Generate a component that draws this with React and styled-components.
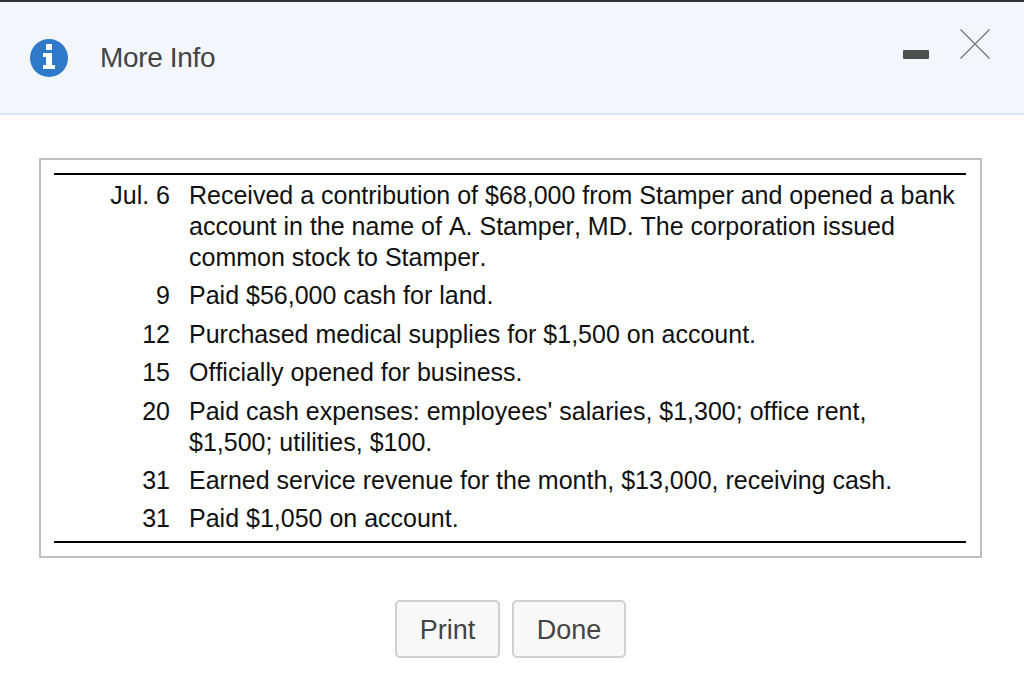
import React from "react"
import styled, { createGlobalStyle } from "styled-components"

const rows = [
  { day: "Jul. 6", lines: ["Received a contribution of $68,000 from Stamper and opened a bank", "account in the name of A. Stamper, MD. The corporation issued", "common stock to Stamper."] },
  { day: "9", lines: ["Paid $56,000 cash for land."] },
  { day: "12", lines: ["Purchased medical supplies for $1,500 on account."] },
  { day: "15", lines: ["Officially opened for business."] },
  { day: "20", lines: ["Paid cash expenses: employees' salaries, $1,300; office rent,", "$1,500; utilities, $100."] },
  { day: "31", lines: ["Earned service revenue for the month, $13,000, receiving cash."] },
  { day: "31", lines: ["Paid $1,050 on account."] },
]

const App = () => (
  <>
    <Global />
    <Page>
      <Header>
        <Title>
          <svg width="38" height="38" viewBox="0 0 38 38">
            <circle cx="19" cy="19" r="19" fill="#2f79c9" />
            <rect x="16" y="5" width="6" height="6" fill="#fff" />
            <path d="M13 14h9v12h3v4H13v-4h3v-8h-3z" fill="#fff" />
          </svg>
          <TitleText>More Info</TitleText>
        </Title>
        <Controls>
          <MinimizeBar />
          <CloseIcon width="30" height="30" viewBox="0 0 30 30">
            <path d="M0.5 0.5l29 29M29.5 0.5l-29 29" stroke="#777" strokeWidth="1.3" fill="none" />
          </CloseIcon>
        </Controls>
      </Header>
      <Panel>
        <Table>
          {rows.map((row, i) => (
            <Row key={i}>
              <Day>{row.day}</Day>
              <div>
                {row.lines.map((line) => (
                  <Line key={line}>{line}</Line>
                ))}
              </div>
            </Row>
          ))}
        </Table>
      </Panel>
      <Buttons>
        <Button $w={105}>Print</Button>
        <Button $w={114}>Done</Button>
      </Buttons>
    </Page>
  </>
)

export default App

const Global = createGlobalStyle`
  html, body {
    margin: 0;
    padding: 0;
    background: #fff;
    overflow: hidden;
  }
`

const Page = styled.div`
  width: 1024px;
  height: 685px;
  font-family: "Liberation Sans", Arial, sans-serif;
  border-top: 2px solid #333;
  box-sizing: border-box;
`

const Header = styled.div`
  height: 113px;
  box-sizing: border-box;
  background: #f3f6fb;
  border-bottom: 2px solid #d3e5f6;
  display: flex;
  justify-content: space-between;
  align-items: flex-start;
  padding: 27px 34px 0 30px;
`

const Title = styled.div`
  display: flex;
  align-items: center;
  gap: 32px;
  margin-top: 10px;
`

const TitleText = styled.span`
  font-size: 28px;
  color: #444;
  letter-spacing: -0.35px;
`

const Controls = styled.div`
  display: flex;
  align-items: flex-start;
  gap: 31px;
`

const MinimizeBar = styled.div`
  width: 26px;
  height: 9px;
  margin-top: 21px;
  border-radius: 1px;
  background: #4f4f4f;
`

const CloseIcon = styled.svg`
  display: block;
`

const Panel = styled.div`
  margin: 43px 0 0 39px;
  width: 943px;
  height: 400px;
  box-sizing: border-box;
  border: 2px solid #c0c0c0;
  padding: 13px 14px 0 13px;
`

const Table = styled.div`
  border-top: 2px solid #000;
  border-bottom: 2px solid #000;
  height: 370px;
  box-sizing: border-box;
  padding-top: 5px;
  display: flex;
  flex-direction: column;
  gap: 7.4px;
`

const Row = styled.div`
  display: grid;
  grid-template-columns: 116px 1fr;
  column-gap: 19px;
  color: #111;
  font-size: 25px;
  line-height: 31px;
  font-kerning: none;
`

const Day = styled.div`
  text-align: right;
  white-space: nowrap;
`

const Line = styled.div`
  white-space: nowrap;
`

const Buttons = styled.div`
  display: flex;
  justify-content: flex-start;
  gap: 12px;
  margin: 42px 0 0 395px;
`

const Button = styled.button`
  width: ${(p) => p.$w}px;
  height: 58px;
  box-sizing: border-box;
  background: #f8f8f8;
  border: 2px solid #d0d0d0;
  border-radius: 5px;
  color: #444;
  font-family: inherit;
  font-size: 27px;
  padding: 2px 0 0;
`
